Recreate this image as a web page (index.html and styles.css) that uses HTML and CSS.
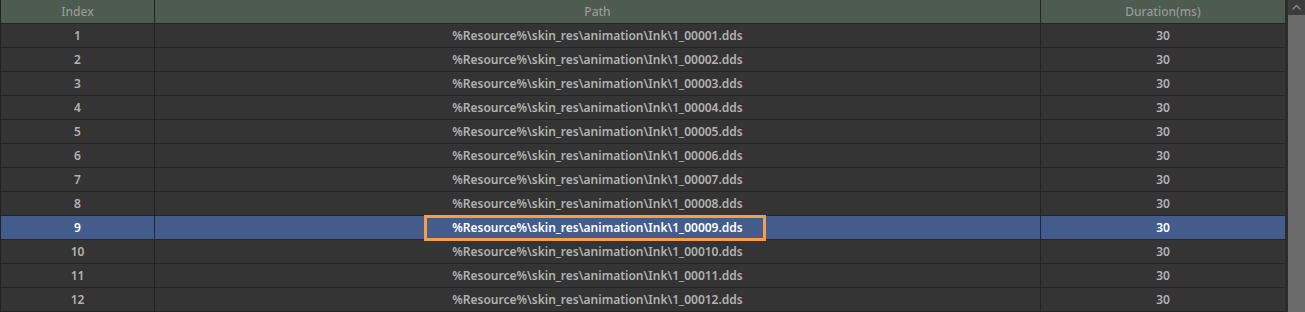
FILE: index.html
```html
<!DOCTYPE html>
<html>
<head>
<meta charset="utf-8">
<link rel="stylesheet" href="styles.css">
</head>
<body>
<div class="view">
  <div class="table">
    <div class="row head">
      <div class="cell">Index</div>
      <div class="cell">Path</div>
      <div class="cell">Duration(ms)</div>
    </div>
    <div class="row"><div class="cell">1</div><div class="cell">%Resource%\skin_res\animation\Ink\1_00001.dds</div><div class="cell">30</div></div>
    <div class="row"><div class="cell">2</div><div class="cell">%Resource%\skin_res\animation\Ink\1_00002.dds</div><div class="cell">30</div></div>
    <div class="row"><div class="cell">3</div><div class="cell">%Resource%\skin_res\animation\Ink\1_00003.dds</div><div class="cell">30</div></div>
    <div class="row"><div class="cell">4</div><div class="cell">%Resource%\skin_res\animation\Ink\1_00004.dds</div><div class="cell">30</div></div>
    <div class="row"><div class="cell">5</div><div class="cell">%Resource%\skin_res\animation\Ink\1_00005.dds</div><div class="cell">30</div></div>
    <div class="row"><div class="cell">6</div><div class="cell">%Resource%\skin_res\animation\Ink\1_00006.dds</div><div class="cell">30</div></div>
    <div class="row"><div class="cell">7</div><div class="cell">%Resource%\skin_res\animation\Ink\1_00007.dds</div><div class="cell">30</div></div>
    <div class="row"><div class="cell">8</div><div class="cell">%Resource%\skin_res\animation\Ink\1_00008.dds</div><div class="cell">30</div></div>
    <div class="row selected"><div class="cell">9</div><div class="cell path-cell"><span class="highlight"></span>%Resource%\skin_res\animation\Ink\1_00009.dds</div><div class="cell">30</div></div>
    <div class="row"><div class="cell">10</div><div class="cell">%Resource%\skin_res\animation\Ink\1_00010.dds</div><div class="cell">30</div></div>
    <div class="row"><div class="cell">11</div><div class="cell">%Resource%\skin_res\animation\Ink\1_00011.dds</div><div class="cell">30</div></div>
    <div class="row"><div class="cell">12</div><div class="cell">%Resource%\skin_res\animation\Ink\1_00012.dds</div><div class="cell">30</div></div>
  </div>
  <div class="scrollbar">
    <div class="sb-button">
      <svg width="17" height="15" viewBox="0 0 17 15"><path d="M4.5 9.5 L8.5 5.5 L12.5 9.5" fill="none" stroke="#8a8a8a" stroke-width="1.4"/></svg>
    </div>
    <div class="sb-thumb"></div>
  </div>
</div>
</body>
</html>
```

FILE: styles.css
```css
html, body {
  margin: 0;
  padding: 0;
  background: #2c2c2c;
  overflow: hidden;
}

.view {
  display: flex;
  width: 1305px;
  height: 312px;
  font-family: "Noto Sans", "Liberation Sans", sans-serif;
  font-size: 12px;
  font-weight: 600;
}

.table {
  width: 1285px;
  border-left: 1px solid #222222;
  box-sizing: border-box;
  display: flex;
  flex-direction: column;
}

.row {
  display: grid;
  grid-template-columns: 153px 885px 244px;
  column-gap: 1px;
  background: #242424;
  height: 24px;
  padding-bottom: 1px;
  box-sizing: border-box;
  flex: none;
}

.cell {
  background: #343434;
  color: #b2b2b2;
  display: flex;
  align-items: center;
  justify-content: center;
  line-height: 23px;
  white-space: nowrap;
}

.head .cell {
  background: #4d5b51;
  color: #979a98;
  font-weight: 500;
}

.selected {
  background: #1f2638;
}

.selected .cell {
  background: #445c8c;
  color: #ffffff;
}

.path-cell {
  position: relative;
}

.highlight {
  position: absolute;
  left: 269px;
  top: -1px;
  width: 342px;
  height: 26px;
  border: 3px solid #f79d46;
  box-sizing: border-box;
}

.scrollbar {
  margin-left: 3px;
  width: 17px;
  display: flex;
  flex-direction: column;
  background: #3a3a3a;
}

.sb-button {
  height: 15px;
  background: #3c3c3c;
  flex: none;
}

.sb-button svg {
  display: block;
}

.sb-thumb {
  flex: 1;
  background: #6b6b6b;
}
```
